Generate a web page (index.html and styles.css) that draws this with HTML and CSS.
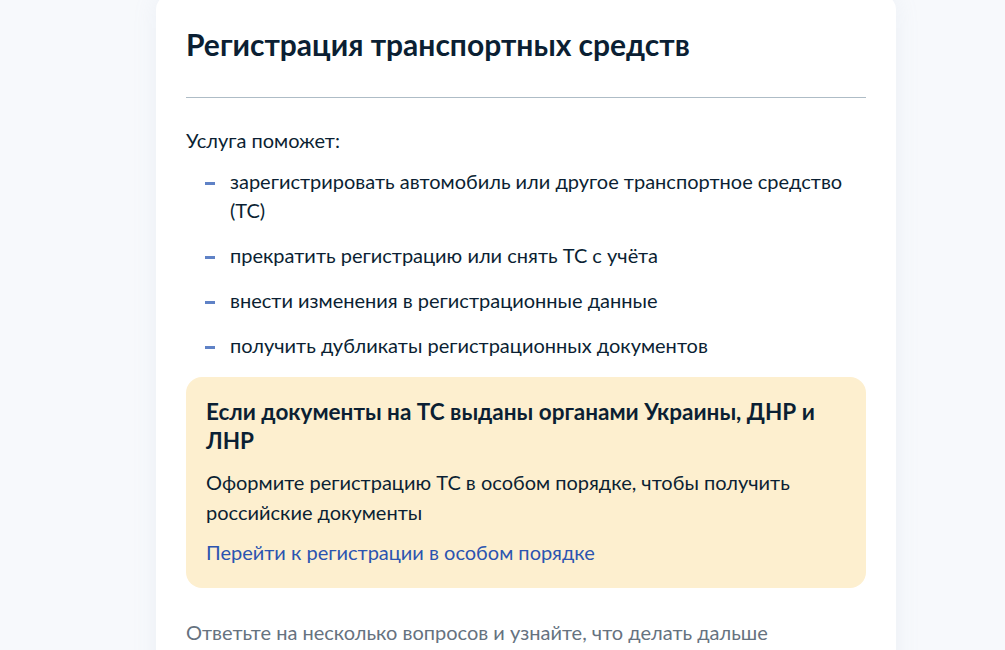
FILE: index.html
```html
<!DOCTYPE html>
<html lang="ru">
<head>
<meta charset="utf-8">
<title>Регистрация транспортных средств</title>
<link rel="stylesheet" href="styles.css">
</head>
<body>
<main class="page">
  <section class="card">
    <h1 class="title">Регистрация транспортных средств</h1>
    <hr class="divider">
    <p class="lead">Услуга поможет:</p>
    <ul class="list">
      <li>зарегистрировать автомобиль или другое транспортное средство (ТС)</li>
      <li>прекратить регистрацию или снять ТС с учёта</li>
      <li>внести изменения в регистрационные данные</li>
      <li>получить дубликаты регистрационных документов</li>
    </ul>
    <div class="notice">
      <h2 class="notice-title">Если документы на ТС выданы органами Украины, ДНР и ЛНР</h2>
      <p class="notice-text">Оформите регистрацию ТС в особом порядке, чтобы получить российские документы</p>
      <a class="notice-link" href="#">Перейти к регистрации в особом порядке</a>
    </div>
    <p class="hint">Ответьте на несколько вопросов и узнайте, что делать дальше</p>
  </section>
</main>
</body>
</html>
```
FILE: styles.css
```css
* { box-sizing: border-box; }
html, body {
  margin: 0;
  padding: 0;
  height: 100%;
  overflow: hidden;
}
body {
  background: #f7f9fc;
  font-family: Lato, "Noto Sans", sans-serif;
  color: #0b1f33;
}
.page {
  padding-left: 156px;
}
.card {
  width: 740px;
  background: #ffffff;
  border-radius: 16px;
  margin-top: -6px;
  padding: 32px 30px 40px;
  box-shadow: 0 0 24px rgba(160, 175, 200, 0.12);
  min-height: 700px;
}
.title {
  margin: 0;
  font-size: 30px;
  line-height: 36px;
  font-weight: 700;
  color: #0b1f33;
}
.divider {
  margin: 35px 0 0;
  border: 0;
  height: 1px;
  background: #aebcc6;
}
.lead {
  margin: 28px 0 0;
  font-size: 20px;
  line-height: 29px;
}
.list {
  list-style: none;
  margin: 12px 0 0;
  padding: 0 0 0 44px;
  display: flex;
  flex-direction: column;
  gap: 16px;
}
.list li {
  position: relative;
  font-size: 20px;
  line-height: 29px;
}
.list li::before {
  content: "";
  position: absolute;
  left: -25px;
  top: 15px;
  width: 10px;
  height: 3px;
  background: #5f82c6;
}
.notice {
  margin-top: 17px;
  background: #fdefcf;
  border-radius: 16px;
  padding: 20px 20px 21px;
}
.notice-title {
  margin: 0;
  font-size: 22.5px;
  line-height: 29px;
  font-weight: 700;
  color: #0b1f33;
}
.notice-text {
  margin: 12px 0 0;
  font-size: 20px;
  line-height: 30px;
}
.notice-link {
  display: block;
  margin-top: 11px;
  font-size: 20px;
  line-height: 29px;
  color: #2b54b0;
  text-decoration: none;
}
.hint {
  margin: 30px 0 0;
  font-size: 20px;
  line-height: 29px;
  color: #66727f;
}
```
